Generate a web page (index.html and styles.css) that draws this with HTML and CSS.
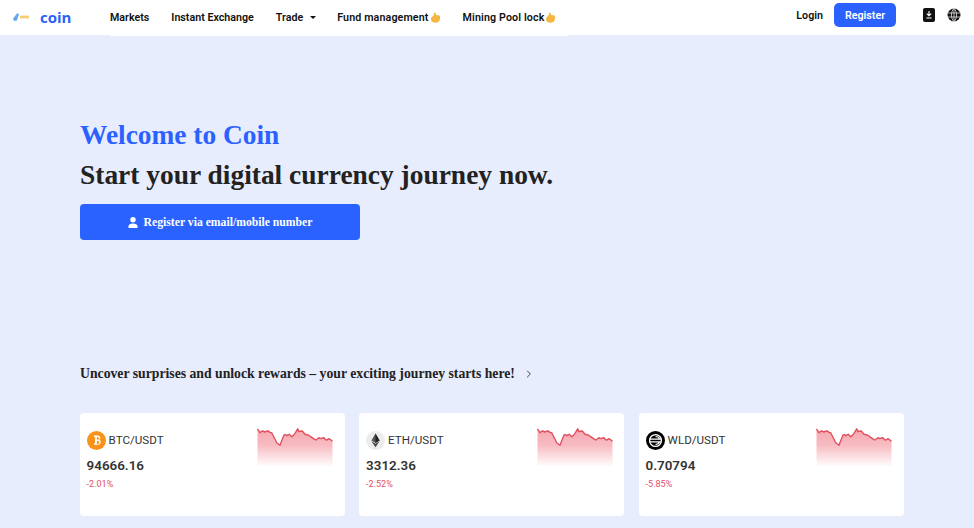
FILE: index.html
```html
<!DOCTYPE html>
<html>
<head>
  <meta charset="UTF-8">
  <meta name="viewport" content="width=device-width, initial-scale=1">
  <title>Coin</title>
  <link rel="stylesheet" href="styles.css">
</head>
<body>
  <svg class="defs" width="0" height="0">
    <defs>
      <linearGradient id="sparkFill" x1="0" y1="0" x2="0" y2="1">
        <stop offset="0" stop-color="#ef6a78" stop-opacity="0.6"/>
        <stop offset="0.45" stop-color="#ef6a78" stop-opacity="0.45"/>
        <stop offset="1" stop-color="#ef6a78" stop-opacity="0.02"/>
      </linearGradient>
      <symbol id="spark" viewBox="0 0 76 38">
        <path fill="url(#sparkFill)" d="M0.5 1L3 4.7 5.7 3 8 4 11.3 3 14.7 4.7 17 9.3 19.7 14.7 23 17.3 24.7 12.7 27 7 29.7 7.7 32.3 6.3 34.7 8.7 38 5.3 40.7 0.6 43 3.3 45.3 3 48 6.3 51.3 7 54.7 9.3 58.7 12 62 9.7 64.7 10.3 67 9.7 69.7 12 72.3 10.7 75.5 13.3V38H0.5Z"/>
        <path fill="none" stroke="#e0505f" stroke-width="1.4" stroke-linejoin="round" d="M0.5 1L2 3.2 3 4.7 4.4 3.4 5.7 3 8 4 9.6 3.2 11.3 3 13 4.4 14.7 4.7 17 9.3 18.4 12 19.7 14.7 23 17.3 24.7 12.7 27 7 28.4 6.6 29.7 7.7 31 6.8 32.3 6.3 34.7 8.7 36.4 7.4 38 5.3 40.7 0.8 42 3.6 43 3.3 45.3 3 48 6.3 51.3 7 54.7 9.3 56.6 10.6 58.7 12 62 9.7 63.4 10.6 64.7 10.3 67 9.7 68.4 11.6 69.7 12 72.3 10.7 75.5 13.3"/>
      </symbol>
      <symbol id="hand" viewBox="0 0 12 12">
        <path fill="#f5b642" d="M5.2 0.6C6.4 0.6 6.6 2 6.4 3.4L9 3.6C11 3.8 11.4 5.4 11 7.4 10.6 10 9.4 11.6 6.4 11.6 3 11.6 1 10.2 1 7.6 1 5.6 3.6 4.6 4.2 3 4.5 2 4.4 0.6 5.2 0.6Z"/>
      </symbol>
    </defs>
  </svg>

  <header class="topbar">
    <a class="brand" href="#">
      <svg class="brand-mark" width="17" height="8" viewBox="0 0 17 8">
        <path fill="#5fa8ee" d="M0 5.5L4.5 0 6 1.5 3.8 7.5 1 8Z"/>
        <path fill="#f2c65e" d="M7 2.6h9v2.8H7z" opacity="0.85"/>
      </svg>
      <span class="brand-name">coin</span>
    </a>
    <nav class="nav">
      <a href="#">Markets</a>
      <a href="#">Instant Exchange</a>
      <a href="#" class="nav-trade">Trade<i class="caret"></i></a>
      <a href="#" class="nav-hot">Fund management<svg class="hand"><use href="#hand"/></svg></a>
      <a href="#" class="nav-hot">Mining Pool lock<svg class="hand"><use href="#hand"/></svg></a>
    </nav>
    <div class="topbar-right">
      <a href="#" class="login">Login</a>
      <a href="#" class="register">Register</a>
      <svg class="tool-icon" width="12" height="14" viewBox="0 0 12 14">
        <rect width="12" height="14" rx="2" fill="#111"/>
        <path d="M6 3v4.4M3.8 5.6L6 7.8l2.2-2.2M3.4 10h5.2" fill="none" stroke="#fff" stroke-width="1.1"/>
      </svg>
      <svg class="tool-icon globe" width="14" height="14" viewBox="0 0 14 14">
        <circle cx="7" cy="7" r="6.5" fill="#111"/>
        <path d="M0.5 5h13M0.5 9h13M7 0.5v13M7 0.5C3.6 3.5 3.6 10.5 7 13.5M7 0.5c3.4 3 3.4 10 0 13" fill="none" stroke="#fff" stroke-width="0.7"/>
      </svg>
    </div>
  </header>

  <main class="page">
    <section class="hero">
      <h1>Welcome to Coin</h1>
      <h2>Start your digital currency journey now.</h2>
      <a href="#" class="hero-btn">
        <svg width="10" height="11" viewBox="0 0 11 12">
          <circle cx="5.5" cy="3" r="3" fill="#fff"/>
          <path d="M0.5 12V10.4C0.5 8.2 2.4 7 5.5 7s5 1.2 5 3.4V12Z" fill="#fff"/>
        </svg>
        Register via email/mobile number
      </a>
    </section>

    <a href="#" class="promo">
      <span>Uncover surprises and unlock rewards – your exciting journey starts here!</span>
      <svg width="6" height="8" viewBox="0 0 6 8"><path d="M1.2 0.8L4.4 4 1.2 7.2" fill="none" stroke="#444" stroke-width="1"/></svg>
    </a>

    <section class="cards">
      <div class="card">
        <div class="card-body">
          <div class="pair">
            <svg class="coin" viewBox="0 0 20 20">
              <circle cx="10" cy="10" r="10" fill="#f7931a"/>
              <path d="M7.2 4.8h4c1.8 0 2.8 1 2.8 2.3 0 1-.6 1.8-1.5 2.1 1.2.3 2 1.2 2 2.4 0 1.6-1.2 2.8-3.1 2.8H7.2l.3-1.4h1V6.3H7.2Zm3.2 1.5v3h.8c.9 0 1.3-.6 1.3-1.5s-.5-1.5-1.3-1.5Zm0 4.3v3h1c1 0 1.5-.6 1.5-1.5s-.5-1.500-1.500-1.500Z" fill="#fff"/>
            </svg>
            <span>BTC/USDT</span>
          </div>
          <div class="price">94666.16</div>
          <div class="change">-2.01%</div>
        </div>
        <svg class="spark"><use href="#spark"/></svg>
      </div>
      <div class="card">
        <div class="card-body">
          <div class="pair">
            <svg class="coin" viewBox="0 0 20 20">
              <circle cx="10" cy="10" r="10" fill="#ececec"/>
              <path d="M10 2.6L5.7 10 10 12.5 14.3 10Z" fill="#555"/>
              <path d="M10 2.6V12.5L14.3 10Z" fill="#222"/>
              <path d="M5.7 10.9L10 17.2l4.3-6.3L10 13.4Z" fill="#444"/>
            </svg>
            <span>ETH/USDT</span>
          </div>
          <div class="price">3312.36</div>
          <div class="change">-2.52%</div>
        </div>
        <svg class="spark"><use href="#spark"/></svg>
      </div>
      <div class="card">
        <div class="card-body">
          <div class="pair">
            <svg class="coin" viewBox="0 0 20 20">
              <circle cx="10" cy="10" r="10" fill="#000"/>
              <circle cx="10" cy="10" r="6.2" fill="none" stroke="#fff" stroke-width="1.4"/>
              <path d="M4 8.6h12M4 11.4h12M14.5 8.6c-1-2-2.8-2.8-4.5-2.8M14.5 11.4c-1 2-2.8 2.8-4.5 2.8" fill="none" stroke="#fff" stroke-width="1.2"/>
            </svg>
            <span>WLD/USDT</span>
          </div>
          <div class="price">0.70794</div>
          <div class="change">-5.85%</div>
        </div>
        <svg class="spark"><use href="#spark"/></svg>
      </div>
    </section>
  </main>
</body>
</html>
```

FILE: styles.css
```css
* {
  box-sizing: border-box;
}
html, body {
  margin: 0;
  padding: 0;
}
body {
  height: 528px;
  overflow: hidden;
  background: #e8edfd;
  font-family: Roboto, "Noto Sans", sans-serif;
  color: #111;
}
a {
  text-decoration: none;
  color: inherit;
}
.defs {
  display: block;
  height: 0;
}

/* top bar */
.topbar {
  display: flex;
  align-items: flex-start;
  height: 35px;
  padding-left: 13px;
  background: #fff;
}
.brand {
  display: flex;
  align-items: center;
  width: 97px;
  height: 33px;
}
.brand-mark {
  flex: none;
  margin-right: 10px;
}
.brand-name {
  font-family: "Open Sans", sans-serif;
  font-size: 15px;
  font-weight: 700;
  color: #2b62f6;
}
.nav {
  display: flex;
  align-items: center;
  gap: 22px;
  height: 36px;
  padding-right: 12px;
  padding-bottom: 2px;
  background: #fff;
  font-size: 10.7px;
  font-weight: 600;
}
.nav-trade {
  display: flex;
  align-items: center;
}
.caret {
  width: 0;
  height: 0;
  margin-left: 7px;
  margin-right: -1px;
  border-left: 3px solid transparent;
  border-right: 3px solid transparent;
  border-top: 3px solid #111;
}
.nav-hot {
  display: flex;
  align-items: center;
  letter-spacing: 0.12px;
}
.hand {
  width: 11px;
  height: 11px;
  margin-left: 1px;
}
.topbar-right {
  display: flex;
  align-items: center;
  height: 30px;
  margin-left: auto;
  padding-right: 13px;
  font-size: 10.7px;
  font-weight: 600;
}
.login {
  margin-right: 11px;
}
.register {
  display: flex;
  align-items: center;
  justify-content: center;
  width: 62px;
  height: 24px;
  margin-right: 27px;
  border-radius: 5px;
  background: #2b62ff;
  color: #fff;
}
.tool-icon {
  flex: none;
}
.globe {
  margin-left: 12px;
}

/* hero */
.page {
  padding: 0 70px 0 80px;
}
.hero {
  padding-top: 84px;
  font-family: "Liberation Serif", serif;
}
.hero h1 {
  margin: 0;
  font-size: 27.4px;
  line-height: 32px;
  font-weight: 700;
  color: #2b62ff;
}
.hero h2 {
  margin: 8px 0 0;
  font-size: 27.45px;
  line-height: 32px;
  font-weight: 700;
  color: #222;
}
.hero-btn {
  display: flex;
  align-items: center;
  justify-content: center;
  gap: 6px;
  width: 280px;
  height: 36px;
  margin-top: 13px;
  border-radius: 4px;
  background: #2962ff;
  color: #fff;
  font-size: 11.7px;
  font-weight: 700;
}
.promo {
  display: flex;
  align-items: center;
  gap: 11px;
  margin-top: 124px;
  font-family: "Liberation Serif", serif;
  font-size: 13.73px;
  line-height: 20px;
  font-weight: 700;
  color: #222;
}

/* cards */
.cards {
  display: grid;
  grid-template-columns: repeat(3, 265px);
  column-gap: 14.5px;
  margin-top: 29px;
  margin-left: -0.4px;
}
.card {
  display: flex;
  justify-content: space-between;
  align-items: flex-start;
  height: 103px;
  padding: 15px 11.5px 0 7px;
  border-radius: 4px;
  background: #fff;
}
.pair {
  display: flex;
  align-items: center;
  gap: 3px;
  height: 24px;
  font-size: 11.6px;
  color: #333;
}
.coin {
  width: 19px;
  height: 19px;
}
.price {
  margin-top: 5px;
  font-size: 13.4px;
  line-height: 18px;
  font-weight: 600;
  color: #333;
}
.change {
  margin-top: 3px;
  font-size: 9px;
  line-height: 12px;
  color: #e0506a;
}
.spark {
  flex: none;
  width: 76px;
  height: 38px;
}
```
